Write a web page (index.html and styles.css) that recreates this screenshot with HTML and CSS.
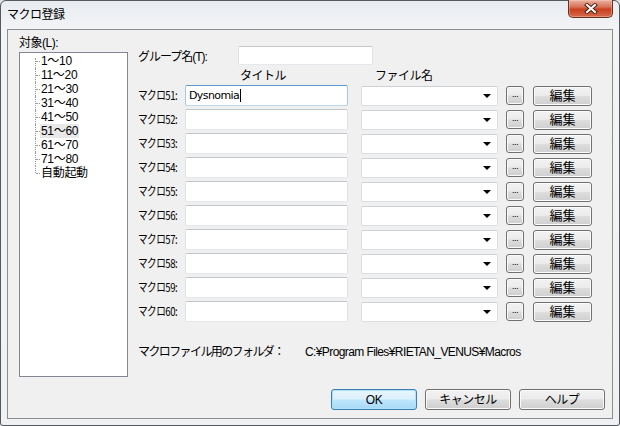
FILE: index.html
```html
<!DOCTYPE html>
<html lang="ja">
<head>
<meta charset="utf-8">
<title>マクロ登録</title>
<link rel="stylesheet" href="styles.css">
</head>
<body>
<div class="window">
  <div class="titlebar">
    <span class="title">マクロ登録</span>
    <div class="close">
      <svg width="14" height="11" viewBox="0 0 14 11">
        <path d="M3 2 L11 9 M11 2 L3 9" stroke="#4a2418" stroke-width="4" stroke-linecap="square" fill="none"/>
        <path d="M3 2 L11 9 M11 2 L3 9" stroke="#ffffff" stroke-width="2" stroke-linecap="square" fill="none"/>
      </svg>
    </div>
  </div>
  <div class="client">
    <div class="main">
      <div class="left">
        <div class="left-label">対象(L):</div>
        <div class="tree">
          <ul class="tree-list">
            <li><span class="node">1～10</span></li>
            <li><span class="node">11～20</span></li>
            <li><span class="node">21～30</span></li>
            <li><span class="node">31～40</span></li>
            <li><span class="node">41～50</span></li>
            <li><span class="node selected">51～60</span></li>
            <li><span class="node">61～70</span></li>
            <li><span class="node">71～80</span></li>
            <li><span class="node">自動起動</span></li>
          </ul>
        </div>
      </div>
      <div class="right">
        <div class="group-row">
          <span class="group-label">グループ名(T):</span>
          <div class="textbox group-input"></div>
        </div>
        <div class="header-row">
          <span class="h-title">タイトル</span>
          <span class="h-file">ファイル名</span>
        </div>
        <div class="rows">
          <div class="row">
            <span class="row-label"><span class="narrow">マクロ51:</span></span>
            <div class="textbox title-input focused"><span class="value">Dysnomia</span><span class="caret"></span></div>
            <div class="combo"><span class="arrow"></span></div>
            <div class="btn dots">...</div>
            <div class="btn edit">編集</div>
          </div>
          <div class="row">
            <span class="row-label"><span class="narrow">マクロ52:</span></span>
            <div class="textbox title-input"></div>
            <div class="combo"><span class="arrow"></span></div>
            <div class="btn dots">...</div>
            <div class="btn edit">編集</div>
          </div>
          <div class="row">
            <span class="row-label"><span class="narrow">マクロ53:</span></span>
            <div class="textbox title-input"></div>
            <div class="combo"><span class="arrow"></span></div>
            <div class="btn dots">...</div>
            <div class="btn edit">編集</div>
          </div>
          <div class="row">
            <span class="row-label"><span class="narrow">マクロ54:</span></span>
            <div class="textbox title-input"></div>
            <div class="combo"><span class="arrow"></span></div>
            <div class="btn dots">...</div>
            <div class="btn edit">編集</div>
          </div>
          <div class="row">
            <span class="row-label"><span class="narrow">マクロ55:</span></span>
            <div class="textbox title-input"></div>
            <div class="combo"><span class="arrow"></span></div>
            <div class="btn dots">...</div>
            <div class="btn edit">編集</div>
          </div>
          <div class="row">
            <span class="row-label"><span class="narrow">マクロ56:</span></span>
            <div class="textbox title-input"></div>
            <div class="combo"><span class="arrow"></span></div>
            <div class="btn dots">...</div>
            <div class="btn edit">編集</div>
          </div>
          <div class="row">
            <span class="row-label"><span class="narrow">マクロ57:</span></span>
            <div class="textbox title-input"></div>
            <div class="combo"><span class="arrow"></span></div>
            <div class="btn dots">...</div>
            <div class="btn edit">編集</div>
          </div>
          <div class="row">
            <span class="row-label"><span class="narrow">マクロ58:</span></span>
            <div class="textbox title-input"></div>
            <div class="combo"><span class="arrow"></span></div>
            <div class="btn dots">...</div>
            <div class="btn edit">編集</div>
          </div>
          <div class="row">
            <span class="row-label"><span class="narrow">マクロ59:</span></span>
            <div class="textbox title-input"></div>
            <div class="combo"><span class="arrow"></span></div>
            <div class="btn dots">...</div>
            <div class="btn edit">編集</div>
          </div>
          <div class="row">
            <span class="row-label"><span class="narrow">マクロ60:</span></span>
            <div class="textbox title-input"></div>
            <div class="combo"><span class="arrow"></span></div>
            <div class="btn dots">...</div>
            <div class="btn edit">編集</div>
          </div>
        </div>
        <div class="folder">
          <span class="folder-label">マクロファイル用のフォルダ：</span>
          <span class="folder-path">C:¥Program Files¥RIETAN_VENUS¥Macros</span>
        </div>
      </div>
    </div>
    <div class="buttons">
      <div class="btn dlg default">OK</div>
      <div class="btn dlg">キャンセル</div>
      <div class="btn dlg">ヘルプ</div>
    </div>
  </div>
</div>
</body>
</html>
```
FILE: styles.css
```css
html, body {
  margin: 0;
  padding: 0;
}
body {
  width: 620px;
  height: 426px;
  overflow: hidden;
  font-family: "Liberation Sans", "Noto Sans CJK JP", sans-serif;
  font-size: 12px;
  color: #000;
  background: #dfe3e8;
}
.window {
  box-sizing: border-box;
  width: 620px;
  height: 426px;
  border: 1px solid #55595e;
  border-radius: 6px 6px 3px 3px;
  background: linear-gradient(#e9edf1, #f3f4f6 30px, #eff1f3);
  display: flex;
  flex-direction: column;
}
.titlebar {
  height: 28px;
  display: flex;
  justify-content: space-between;
  align-items: flex-start;
  padding: 0 6px;
}
.title {
  margin-top: 7px;
  line-height: 14px;
  font-size: 12px;
  letter-spacing: -0.5px;
}
.close {
  width: 45px;
  height: 18px;
  margin-top: -1px;
  box-sizing: border-box;
  border: 1px solid #6b2f22;
  border-top: none;
  border-radius: 0 0 5px 5px;
  background: linear-gradient(#eab3a2, #d9735a 40%, #c8401f 55%, #d56b4c 100%);
  box-shadow: inset 0 0 0 1px rgba(255, 220, 200, 0.35);
  display: flex;
  align-items: center;
  justify-content: center;
}
.client {
  margin: 0 6px;
  height: 390px;
  box-sizing: border-box;
  border: 1px solid #8c8d8e;
  background: #f0f0f0;
  display: flex;
  flex-direction: column;
}
.main {
  flex: 1;
  display: flex;
  gap: 10px;
  padding: 6px 0 0 11px;
}
.left {
  width: 109px;
  display: flex;
  flex-direction: column;
}
.left-label {
  height: 14px;
  line-height: 14px;
  letter-spacing: -0.5px;
}
.tree {
  margin-top: 2px;
  height: 325px;
  box-sizing: border-box;
  border: 1px solid #828790;
  background: #fff;
}
.tree-list {
  list-style: none;
  margin: 0;
  padding: 1px 0 0 15px;
}
.tree-list li {
  position: relative;
  height: 14px;
  line-height: 14px;
  padding-left: 5px;
}
.tree-list li::before {
  content: "";
  position: absolute;
  left: 0;
  top: 0;
  height: 14px;
  border-left: 1px dotted #9a9a9a;
}
.tree-list li:first-child::before {
  top: 4px;
  height: 10px;
}
.tree-list li:last-child::before {
  height: 7px;
}
.tree-list li::after {
  content: "";
  position: absolute;
  left: 1px;
  top: 7px;
  width: 4px;
  border-top: 1px dotted #9a9a9a;
}
.node {
  padding: 0 1px;
  letter-spacing: -0.3px;
}
.node.selected {
  background: #e9e9e9;
}
.right {
  flex: 1;
  display: flex;
  flex-direction: column;
}
.group-row {
  display: flex;
  align-items: center;
  margin-top: 10px;
  height: 19px;
}
.group-label {
  width: 100px;
  letter-spacing: -1px;
  white-space: nowrap;
}
.textbox {
  box-sizing: border-box;
  background: #fff;
  border: 1px solid;
  border-color: #c3c6cb #dfe2e6 #e4e7eb #dfe2e6;
  border-radius: 2px;
}
.group-input {
  width: 135px;
  height: 19px;
}
.header-row {
  display: flex;
  margin-top: 4px;
  height: 14px;
  line-height: 14px;
}
.h-title {
  margin-left: 102px;
  width: 135px;
  letter-spacing: -0.5px;
}
.h-file {
  letter-spacing: -0.5px;
}
.rows {
  margin-top: 2px;
  display: flex;
  flex-direction: column;
  gap: 3px;
}
.row {
  display: flex;
  align-items: center;
  height: 21px;
}
.row-label {
  width: 47px;
  white-space: nowrap;
  overflow: visible;
}
.narrow {
  display: inline-block;
  font-family: "Noto Sans CJK JP", sans-serif;
  line-height: 14px;
  transform: scaleX(0.8);
  transform-origin: left center;
  letter-spacing: -0.6px;
}
.title-input {
  width: 163px;
  height: 21px;
  display: flex;
  align-items: center;
  padding-left: 3px;
}
.title-input.focused {
  border-color: #5a9ad0 #a4c9e8 #b8d6ef #a4c9e8;
}
.value {
  font-family: "DejaVu Sans", sans-serif;
  font-size: 11px;
  line-height: 13px;
  letter-spacing: -0.6px;
}
.caret {
  width: 1px;
  height: 13px;
  margin-left: 1px;
  background: #000;
}
.combo {
  box-sizing: border-box;
  width: 137px;
  height: 20px;
  margin-left: 13px;
  background: #fff;
  border: 1px solid #dadde1;
  border-top-color: #cdd0d5;
  border-radius: 2px;
  display: flex;
  align-items: center;
  justify-content: flex-end;
  padding-right: 6px;
}
.arrow {
  width: 0;
  height: 0;
  border-left: 4px solid transparent;
  border-right: 4px solid transparent;
  border-top: 4px solid #000;
  margin-top: 1px;
}
.btn {
  box-sizing: border-box;
  border: 1px solid #707070;
  border-radius: 3px;
  background: linear-gradient(#f2f2f2 0%, #ebebeb 48%, #dddddd 52%, #cfcfcf 100%);
  box-shadow: inset 0 0 0 1px #fbfbfb;
  display: flex;
  align-items: center;
  justify-content: center;
  line-height: 14px;
}
.dots {
  width: 18px;
  height: 19px;
  margin-left: 8px;
  font-size: 9px;
  align-items: flex-end;
  padding-bottom: 3px;
  letter-spacing: -0.5px;
}
.edit {
  width: 59px;
  height: 20px;
  margin-left: 9px;
  font-size: 13px;
}
.folder {
  margin-top: 23px;
  display: flex;
  line-height: 14px;
  white-space: nowrap;
}
.folder-label {
  width: 167px;
  letter-spacing: -1.6px;
}
.folder-path {
  letter-spacing: -0.6px;
}
.buttons {
  display: flex;
  justify-content: flex-end;
  gap: 8px;
  padding: 0 7px 8px 0;
}
.dlg {
  width: 86px;
  height: 21px;
  letter-spacing: -0.5px;
}
.dlg.default {
  border-color: #3c7fb1;
  box-shadow: inset 0 0 0 1px #aee1fa;
  background: linear-gradient(#eaf6fd 0%, #d9f0fc 48%, #bee6fd 52%, #a7d9f5 100%);
}
```
